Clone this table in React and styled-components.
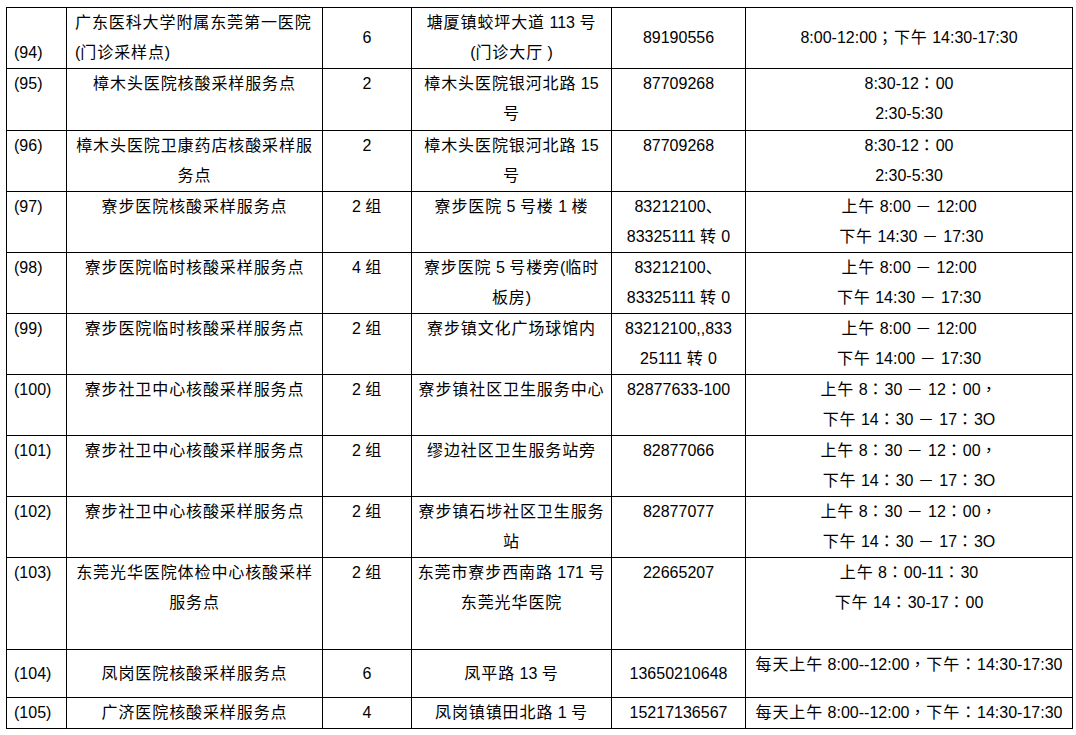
import React from 'react'
import styled, { createGlobalStyle } from 'styled-components'

const GlobalStyle = createGlobalStyle`
  body {
    margin: 0;
    background: #fff;
  }
`

// split text into latin, CJK and centred full-width punctuation runs
const RUNS = /([：；，]+|(?:(?![：；，])[\u2E80-\u9FFF\u3000-\u303F\uFF00-\uFFEF])+)/
const PUNCT = /^[：；，]+$/

const widths = [60, 256, 89, 200, 134, 327]

const rows = [
  {
    idx: '(94)', h: 61, v: 'middle', iv: 'bottom', nv: 'top', left: true,
    name: ['广东医科大学附属东莞第一医院', '(门诊采样点)'],
    count: '6',
    addr: ['塘厦镇蛟坪大道 113 号', '(门诊大厅 )'],
    phone: ['89190556'],
    hours: ['8:00-12:00；下午 14:30-17:30'],
  },
  {
    idx: '(95)', h: 62,
    name: ['樟木头医院核酸采样服务点'],
    count: '2',
    addr: ['樟木头医院银河北路 15', '号'],
    phone: ['87709268'],
    hours: ['8:30-12：00', '2:30-5:30'],
  },
  {
    idx: '(96)', h: 61,
    name: ['樟木头医院卫康药店核酸采样服', '务点'],
    count: '2',
    addr: ['樟木头医院银河北路 15', '号'],
    phone: ['87709268'],
    hours: ['8:30-12：00', '2:30-5:30'],
  },
  {
    idx: '(97)', h: 61,
    name: ['寮步医院核酸采样服务点'],
    count: '2 组',
    addr: ['寮步医院 5 号楼 1 楼'],
    phone: ['83212100、', '83325111 转 0'],
    hours: ['上午 8:00 － 12:00', ' 下午 14:30 － 17:30'],
  },
  {
    idx: '(98)', h: 61,
    name: ['寮步医院临时核酸采样服务点'],
    count: '4 组',
    addr: ['寮步医院 5 号楼旁(临时', '板房)'],
    phone: ['83212100、', '83325111 转 0'],
    hours: ['上午 8:00 － 12:00', '下午 14:30 － 17:30'],
  },
  {
    idx: '(99)', h: 61,
    name: ['寮步医院临时核酸采样服务点'],
    count: '2 组',
    addr: ['寮步镇文化广场球馆内'],
    phone: ['83212100,,833', '25111 转 0'],
    hours: ['上午 8:00 － 12:00', '下午 14:00 － 17:30'],
  },
  {
    idx: '(100)', h: 61,
    name: ['寮步社卫中心核酸采样服务点'],
    count: '2 组',
    addr: ['寮步镇社区卫生服务中心'],
    phone: ['82877633-100'],
    hours: ['上午 8：30 － 12：00，', '下午 14：30 － 17：3O'],
  },
  {
    idx: '(101)', h: 61,
    name: ['寮步社卫中心核酸采样服务点'],
    count: '2 组',
    addr: ['缪边社区卫生服务站旁'],
    phone: ['82877066'],
    hours: ['上午 8：30 － 12：00，', '下午 14：30 － 17：3O'],
  },
  {
    idx: '(102)', h: 61,
    name: ['寮步社卫中心核酸采样服务点'],
    count: '2 组',
    addr: ['寮步镇石埗社区卫生服务', '站'],
    phone: ['82877077'],
    hours: ['上午 8：30 － 12：00，', '下午 14：30 － 17：3O'],
  },
  {
    idx: '(103)', h: 92,
    name: ['东莞光华医院体检中心核酸采样', '服务点'],
    count: '2 组',
    addr: ['东莞市寮步西南路 171 号', '东莞光华医院'],
    phone: ['22665207'],
    hours: ['上午 8：00-11：30', '下午 14：30-17：00'],
  },
  {
    idx: '(104)', h: 48, v: 'middle', hv: 'top',
    name: ['凤岗医院核酸采样服务点'],
    count: '6',
    addr: ['凤平路 13 号'],
    phone: ['13650210648'],
    hours: ['每天上午 8:00--12:00，下午：14:30-17:30'],
  },
  {
    idx: '(105)', h: 30, v: 'middle',
    name: ['广济医院核酸采样服务点'],
    count: '4',
    addr: ['凤岗镇镇田北路 1 号'],
    phone: ['15217136567'],
    hours: ['每天上午 8:00--12:00，下午：14:30-17:30'],
  },
]

function Text({ children }) {
  return children.split(RUNS).map((part, i) => {
    if (i % 2 === 0) return part
    return PUNCT.test(part) ? <Punct key={i}>{part}</Punct> : <Han key={i}>{part}</Han>
  })
}

function Lines({ lines }) {
  return lines.map((l, i) => (
    <Line key={i}>
      <Text>{l}</Text>
    </Line>
  ))
}

export default function App() {
  return (
    <Page>
      <GlobalStyle />
      <Table>
        <colgroup>
          {widths.map((w, i) => (
            <Col key={i} $w={w} />
          ))}
        </colgroup>
        <tbody>
          {rows.map((r) => {
            const v = r.v || 'top'
            return (
              <Row key={r.idx} $h={r.h}>
                <Cell $align="left" $valign={r.iv || v} $pad="7px">
                  <Lines lines={[r.idx]} />
                </Cell>
                <Cell
                  $align={r.left ? 'left' : 'center'}
                  $valign={r.nv || v}
                  $pad={r.left ? '8px' : '0'}
                >
                  <Lines lines={r.name} />
                </Cell>
                <Cell $valign={v}>
                  <Lines lines={[r.count]} />
                </Cell>
                <Cell $valign={r.nv || v}>
                  <Lines lines={r.addr} />
                </Cell>
                <Cell $valign={v}>
                  <Lines lines={r.phone} />
                </Cell>
                <Cell $valign={r.hv || v}>
                  <Lines lines={r.hours} />
                </Cell>
              </Row>
            )
          })}
        </tbody>
      </Table>
    </Page>
  )
}

const Page = styled.div`
  padding: 7px 0 0 6px;
  font-family: 'Liberation Sans', 'Noto Sans CJK SC', sans-serif;
  font-size: 16px;
  color: #000;
`
const Table = styled.table`
  border-collapse: collapse;
  table-layout: fixed;
  width: 1067px;
`
const Col = styled.col`
  width: ${(p) => p.$w}px;
`
const Row = styled.tr`
  height: ${(p) => p.$h}px;
`
const Cell = styled.td`
  border: 1px solid #000;
  padding: 0 ${(p) => p.$pad || '0'};
  text-align: ${(p) => p.$align || 'center'};
  vertical-align: ${(p) => p.$valign || 'top'};
  line-height: 30px;
`
const Line = styled.div`
  height: 30px;
  line-height: 30px;
  white-space: pre;
  overflow: visible;
`
const Han = styled.span`
  font-family: 'Noto Sans CJK SC', sans-serif;
  letter-spacing: 0.9px;
  line-height: 1;
`
const Punct = styled(Han)`
  font-family: 'Noto Sans CJK TC', sans-serif;
`
